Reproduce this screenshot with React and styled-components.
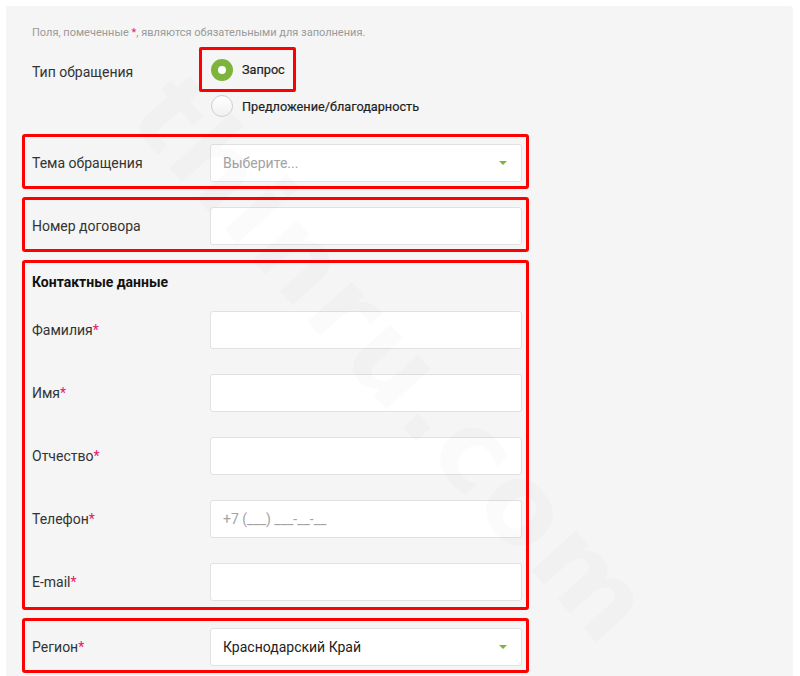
import styled, { createGlobalStyle } from "styled-components";

const GlobalStyle = createGlobalStyle`
  html, body {
    margin: 0;
    padding: 0;
    background: #ffffff;
    font-family: Roboto, "Liberation Sans", Arial, sans-serif;
  }
`;

const Page = styled.div`
  padding: 6px 7px 0 6px;
  height: 676px;
  box-sizing: border-box;
  overflow: hidden;
`;

const Panel = styled.div`
  position: relative;
  background: #f4f5f4;
  border-radius: 0 4px 0 0;
  min-height: 700px;
  padding: 20px 0 0 16px;
  box-sizing: border-box;
  overflow: hidden;
`;

// faint diagonal watermark lying over the form
const Watermark = styled.div`
  position: absolute;
  left: 195px;
  top: 45px;
  transform: rotate(48deg);
  transform-origin: left top;
  font-family: "DejaVu Sans", sans-serif;
  font-weight: 700;
  font-size: 110px;
  letter-spacing: 4px;
  color: rgba(0, 0, 0, 0.017);
  pointer-events: none;
  white-space: nowrap;
  z-index: 2;
`;

const Hint = styled.p`
  margin: 0 0 7px 10px;
  font-size: 11px;
  line-height: 14px;
  color: #9a9a9a;
`;

const Star = styled.span`
  color: #e5176f;
`;

const TypeRow = styled.div`
  display: flex;
  padding-left: 10px;
`;

const TypeLabel = styled.div`
  width: 167px;
  font-size: 14px;
  color: #333;
  line-height: 20px;
  padding-top: 15px;
`;

const RadioGroup = styled.div`
  display: flex;
  flex-direction: column;
  align-items: flex-start;
`;

const Radio = styled.label`
  display: flex;
  align-items: center;
  gap: 9px;
  box-sizing: border-box;
  height: ${(p) => (p.$marked ? "45px" : "28px")};
  padding: ${(p) => (p.$marked ? "0 8px 0 9px" : "0 0 0 12px")};
  border: ${(p) => (p.$marked ? "3px solid #ff0000" : "none")};
  border-radius: 2px;
  font-size: 12.7px;
  font-weight: 400;
  color: #1e1e1e;
  -webkit-text-stroke: 0.2px #1e1e1e;
`;

const Dot = styled.span`
  width: 22px;
  height: 22px;
  border-radius: 50%;
  box-sizing: border-box;
  flex-shrink: 0;
  background: ${(p) => (p.$on ? "#fff" : "linear-gradient(#ffffff, #f1f1f1)")};
  border: ${(p) => (p.$on ? "7px solid #7db43b" : "1px solid #cfcfcf")};
`;

const Block = styled.div`
  width: 507px;
  box-sizing: border-box;
  border: 3px solid #ff0000;
  border-radius: 3px;
  margin-top: ${(p) => p.$top || "8px"};
  padding: ${(p) => p.$pad || "7px 4px 4px 7px"};
`;

const Row = styled.div`
  display: grid;
  grid-template-columns: 178px 312px;
  align-items: center;
  & + & {
    margin-top: 25px;
  }
`;

const Label = styled.div`
  font-size: 14px;
  color: #333;
`;

const Title = styled.div`
  font-size: 14px;
  font-weight: 700;
  color: #111;
  line-height: 20px;
  margin: 3px 0 19px;
`;

const Field = styled.div`
  height: 38px;
  box-sizing: border-box;
  background: #fff;
  border: 1px solid #e1e1e1;
  border-radius: 3px;
  display: flex;
  align-items: center;
  justify-content: space-between;
  padding: 0 14px 0 12px;
  font-size: 14px;
  color: ${(p) => (p.$muted ? "#a3a3a3" : "#222")};
`;

const Arrow = styled.span`
  width: 0;
  height: 0;
  border-left: 4px solid transparent;
  border-right: 4px solid transparent;
  border-top: 4px solid #7db43b;
`;

const contacts = [
  { label: "Фамилия" },
  { label: "Имя" },
  { label: "Отчество" },
  { label: "Телефон", placeholder: "+7 (___) ___-__-__" },
  { label: "E-mail" },
];

export default function App() {
  return (
    <Page>
      <GlobalStyle />
      <Panel>
        <Watermark>thinru.com</Watermark>
        <Hint>
          Поля, помеченные <Star>*</Star>, являются обязательными для заполнения.
        </Hint>
        <TypeRow>
          <TypeLabel>Тип обращения</TypeLabel>
          <RadioGroup>
            <Radio $marked>
              <Dot $on />
              Запрос
            </Radio>
            <Radio>
              <Dot />
              Предложение/благодарность
            </Radio>
          </RadioGroup>
        </TypeRow>

        <Block $top="14px">
          <Row>
            <Label>Тема обращения</Label>
            <Field $muted>
              Выберите...
              <Arrow />
            </Field>
          </Row>
        </Block>

        <Block>
          <Row>
            <Label>Номер договора</Label>
            <Field />
          </Row>
        </Block>

        <Block $pad="6px 4px 6px 7px">
          <Title>Контактные данные</Title>
          {contacts.map((c) => (
            <Row key={c.label}>
              <Label>
                {c.label}
                <Star>*</Star>
              </Label>
              <Field $muted>{c.placeholder}</Field>
            </Row>
          ))}
        </Block>

        <Block>
          <Row>
            <Label>
              Регион<Star>*</Star>
            </Label>
            <Field>
              Краснодарский Край
              <Arrow />
            </Field>
          </Row>
        </Block>
      </Panel>
    </Page>
  );
}
